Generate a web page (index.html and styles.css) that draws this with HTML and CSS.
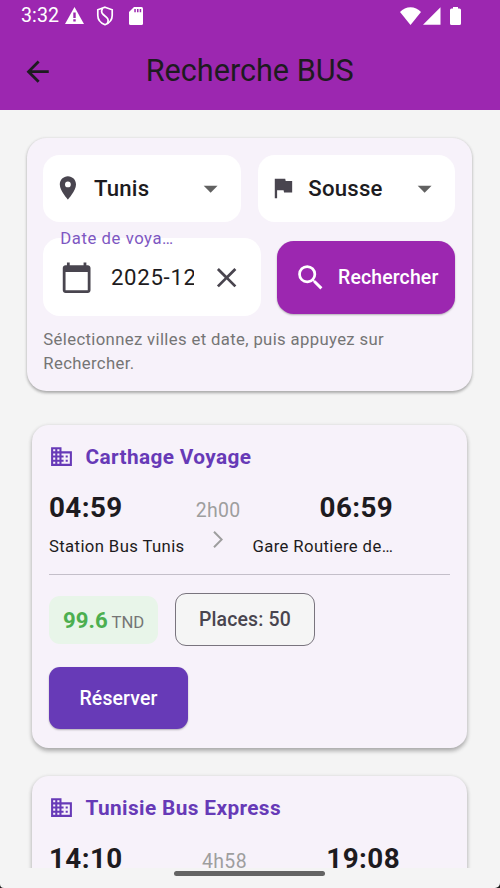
FILE: index.html
```html
<!DOCTYPE html>
<html lang="fr">
<head>
<meta charset="utf-8">
<title>Recherche BUS</title>
<link rel="stylesheet" href="styles.css">
</head>
<body>
<div class="screen">
  <header class="header">
    <div class="status">
      <span class="clock">3:32</span>
      <svg class="s-warn" viewBox="0 0 19 17"><path fill="#fff" d="M9.5 0 19 17H0z"/><path fill="#9c27b0" d="M8.300 5.500h2.400v5.500H8.300zM8.300 12.300h2.400v2.200H8.300z"/></svg>
      <svg class="s-shield" viewBox="0 0 18 20"><path fill="none" stroke="#fff" stroke-width="1.700" d="M9 1.200 16.200 3.800v5.700c0 4-2.800 7.500-7.200 9.200C4.600 17 1.800 13.500 1.800 9.500V3.800z"/><path fill="none" stroke="#fff" stroke-width="1.700" d="M6.500 2.500C5 5 5.500 7 7.200 8.500l3.600 3.200c1.700 1.700 1.700 3.800.4 6"/></svg>
      <svg class="s-sd" viewBox="0 0 14 18"><path fill="#fff" d="M5 0h7.500Q14 0 14 1.500v15q0 1.500-1.500 1.500h-11Q0 18 0 16.500V5z"/><path fill="#9c27b0" d="M5.300 2h1.500v3.200H5.300zM8 2h1.500v3.200H8zM10.700 2h1.500v3.200h-1.500z"/></svg>
      <svg class="s-wifi" viewBox="0 0 21 18"><path fill="#fff" d="M10.500 18 0 5C5.500-1.300 15.500-1.300 21 5z"/></svg>
      <svg class="s-cell" viewBox="0 0 18 18"><path fill="#fff" d="M18 0v18H0z"/></svg>
      <svg class="s-batt" viewBox="0 0 11 18"><path fill="#fff" d="M3 0h5v1.500h1.500Q11 1.500 11 3v13.500q0 1.500-1.500 1.500h-8Q0 18 0 16.500V3q0-1.500 1.500-1.500H3z"/></svg>
    </div>
    <div class="appbar">
      <svg class="icon back" viewBox="0 0 24 24"><path d="M20 11H7.830l5.590-5.590L12 4l-8 8 8 8 1.410-1.410L7.830 13H20z"/></svg>
      <h1 class="title">Recherche BUS</h1>
    </div>
  </header>

  <main class="content">
    <section class="search">
      <div class="selects">
        <div class="select">
          <svg class="icon small" viewBox="0 0 24 24"><path d="M12 2C8.130 2 5 5.130 5 9c0 5.250 7 13 7 13s7-7.750 7-13c0-3.870-3.130-7-7-7zm0 9.500a2.500 2.500 0 1 1 0-5 2.500 2.500 0 0 1 0 5z"/></svg>
          <span class="city">Tunis</span>
          <svg class="icon caret" viewBox="0 0 24 24"><path d="M7 10l5 5 5-5z"/></svg>
        </div>
        <div class="select">
          <svg class="icon small" viewBox="0 0 24 24"><path d="M14.400 6 14 4H5v17h2v-7h5.600l.4 2h7V6z"/></svg>
          <span class="city">Sousse</span>
          <svg class="icon caret" viewBox="0 0 24 24"><path d="M7 10l5 5 5-5z"/></svg>
        </div>
      </div>
      <div class="actions">
        <div class="date">
          <span class="label">Date de voya…</span>
          <svg class="icon" viewBox="0 0 24 24"><path d="M20 3h-1V1h-2v2H7V1H5v2H4c-1.100 0-2 .9-2 2v16c0 1.100.9 2 2 2h16c1.100 0 2-.9 2-2V5c0-1.100-.9-2-2-2zm0 18H4V8h16v13z"/></svg>
          <span class="value">2025-12</span>
          <svg class="icon" viewBox="0 0 24 24"><path d="M19 6.410 17.590 5 12 10.590 6.410 5 5 6.410 10.590 12 5 17.590 6.410 19 12 13.410 17.590 19 19 17.590 13.410 12z"/></svg>
        </div>
        <button class="find">
          <svg class="icon" viewBox="0 0 24 24"><path d="M15.500 14h-.79l-.28-.27A6.471 6.471 0 0 0 16 9.500 6.500 6.500 0 1 0 9.500 16c1.610 0 3.090-.59 4.230-1.570l.27.28v.79l5 4.990L20.490 19l-4.990-5zm-6 0C7.010 14 5 11.990 5 9.500S7.010 5 9.500 5 14 7.010 14 9.500 11.990 14 9.500 14z"/></svg>
          <span>Rechercher</span>
        </button>
      </div>
      <p class="hint">Sélectionnez villes et date, puis appuyez sur Rechercher.</p>
    </section>

    <article class="trip">
      <div class="company">
        <svg class="icon" viewBox="0 0 24 24"><path d="M12 7V3H2v18h20V7H12zM6 19H4v-2h2v2zm0-4H4v-2h2v2zm0-4H4V9h2v2zm0-4H4V5h2v2zm4 12H8v-2h2v2zm0-4H8v-2h2v2zm0-4H8V9h2v2zm0-4H8V5h2v2zm10 12h-8v-2h2v-2h-2v-2h2v-2h-2V9h8v10zm-2-8h-2v2h2v-2zm0 4h-2v2h2v-2z"/></svg>
        <h2>Carthage Voyage</h2>
      </div>
      <div class="route">
        <div class="stop"><span class="time">04:59</span><span class="place">Station Bus Tunis</span></div>
        <div class="leg"><span class="duration">2h00</span><svg class="chevron" viewBox="0 0 10 17"><path d="M1 .8 8.700 8.500 1 16.200"/></svg></div>
        <div class="stop end"><span class="time">06:59</span><span class="place">Gare Routiere de…</span></div>
      </div>
      <hr>
      <div class="chips">
        <div class="price"><b>99.6</b> <span>TND</span></div>
        <div class="seats">Places: 50</div>
      </div>
      <button class="book">Réserver</button>
    </article>

    <article class="trip">
      <div class="company">
        <svg class="icon" viewBox="0 0 24 24"><path d="M12 7V3H2v18h20V7H12zM6 19H4v-2h2v2zm0-4H4v-2h2v2zm0-4H4V9h2v2zm0-4H4V5h2v2zm4 12H8v-2h2v2zm0-4H8v-2h2v2zm0-4H8V9h2v2zm0-4H8V5h2v2zm10 12h-8v-2h2v-2h-2v-2h2v-2h-2V9h8v10zm-2-8h-2v2h2v-2zm0 4h-2v2h2v-2z"/></svg>
        <h2>Tunisie Bus Express</h2>
      </div>
      <div class="route wide">
        <div class="stop"><span class="time">14:10</span></div>
        <div class="leg"><span class="duration">4h58</span></div>
        <div class="stop end"><span class="time">19:08</span></div>
      </div>
    </article>
  </main>
  <footer class="nav"><div class="pill"></div></footer>
</div>
</body>
</html>
```
FILE: styles.css
```css
* { box-sizing: border-box; margin: 0; padding: 0; }
body { background: #1b1b1b; font-family: Roboto, "Liberation Sans", sans-serif; color: #1d1b20; }
button { border: 0; font-family: inherit; color: #fff; }
.screen { width: 500px; height: 888px; display: flex; flex-direction: column; overflow: hidden; background: #f4f4f4; border-radius: 0 0 5px 4px; }
.icon { width: 33.300px; height: 33.300px; flex: none; display: block; fill: currentColor; }

.header { height: 110.300px; flex: none; background: #9c27b0; }
.status { height: 33px; padding: 0 39px 0 21px; display: flex; align-items: flex-start; }
.clock { width: 44px; line-height: 24px; padding-top: 4px; font-size: 19.600px; letter-spacing: 0.1px; color: #fff; }
.s-warn { width: 19px; height: 17px; margin-top: 7px; }
.s-shield { width: 18px; height: 20px; margin: 6px 0 0 12px; }
.s-sd { width: 14px; height: 18px; margin: 7px 0 0 14.500px; }
.s-wifi { width: 21px; height: 18px; margin: 6.500px 2px 0 auto; }
.s-cell { width: 17.500px; height: 18px; margin-top: 6.500px; }
.s-batt { width: 11px; height: 18px; margin: 6.500px 0 0 9.500px; }
.appbar { height: 77px; display: grid; grid-template-columns: 1fr auto 1fr; align-items: center; padding-left: 21px; padding-right: 21.500px; }
.title { font-size: 30.600px; font-weight: 400; line-height: 38px; margin-top: -1px; }

.content { flex: 1; min-height: 0; overflow: hidden; padding: 28px 27px 0 26.600px; }
.search { width: 445.500px; height: 253px; padding: 16.700px 16.700px; border-radius: 19.400px; background: #f7f2fa; box-shadow: 0 1.500px 3px rgba(0,0,0,.28), 0 1px 4px rgba(0,0,0,.06); }
.selects { display: grid; grid-template-columns: 1fr 1fr; gap: 16.700px; }
.select { height: 66.700px; padding: 0 13.800px 0 11.200px; border-radius: 16.700px; background: #fff; display: flex; align-items: center; color: #49454f; }
.small { width: 27.800px; height: 27.800px; }
.city { flex: 1; margin-left: 11.700px; font-size: 22.200px; font-weight: 500; letter-spacing: .2px; color: #1d1b20; }
.caret { color: #616161; }
.actions { margin-top: 16.700px; display: flex; align-items: center; gap: 16.700px; }
.date { position: relative; width: 217.300px; height: 78px; padding: 0 17px; border-radius: 16.700px; background: #fff; display: flex; align-items: center; color: #49454f; }
.label { position: absolute; left: 17px; top: -10.500px; font-size: 16.700px; line-height: 22px; letter-spacing: .56px; color: #7e57c2; white-space: nowrap; }
.value { width: 83px; margin: 0 16.500px 0 17.300px; overflow: hidden; white-space: nowrap; font-size: 22.200px; line-height: 30px; letter-spacing: .7px; color: #1d1b20; }
.find { flex: 1; height: 73px; padding-left: 16.500px; border-radius: 16.700px; background: #9c27b0; display: flex; align-items: center; gap: 11px; font-size: 19.440px; font-weight: 500; letter-spacing: .14px; box-shadow: 0 1px 2px rgba(0,0,0,.28); }
.hint { margin-top: 12px; font-size: 16.700px; line-height: 24px; letter-spacing: .36px; color: #757575; }

.trip { width: 435px; height: 323px; margin: 34px 0 0 5.400px; padding: 16.700px 17px; border-radius: 16.700px; background: #f7f2fa; box-shadow: 0 2.500px 4px rgba(0,0,0,.28), 0 1px 5px rgba(0,0,0,.06); }
.trip + .trip { margin-top: 28px; }
.company { height: 30px; display: flex; align-items: center; gap: 11.500px; color: #673ab7; }
.company .icon { width: 25px; height: 25px; }
.company h2 { font-size: 20.800px; font-weight: 700; letter-spacing: .38px; line-height: 30px; }
.route { margin-top: 17px; display: grid; grid-template-columns: 146.700px 45px 152.500px; height: 71px; }
.route.wide { grid-template-columns: 153px 45px 153px; }
.stop { display: flex; flex-direction: column; }
.stop.end { align-items: flex-end; }
.time { font-size: 27.800px; font-weight: 700; line-height: 38px; letter-spacing: .4px; }
.place { margin-top: 9px; font-size: 16.700px; line-height: 22px; letter-spacing: .38px; white-space: nowrap; }
.leg { display: flex; flex-direction: column; align-items: center; color: #9e9e9e; }
.duration { font-size: 19.440px; line-height: 24px; letter-spacing: .35px; margin-top: 10px; }
.chevron { width: 10px; height: 17px; margin-top: 8px; fill: none; stroke: currentColor; stroke-width: 2; }
hr { border: 0; height: 1px; background: #c4bfc9; margin-top: 14.500px; }
.chips { margin-top: 18px; display: flex; align-items: center; gap: 16.700px; }
.price { width: 109.500px; height: 48.500px; padding-left: 14px; border-radius: 11px; background: #e8f5e9; line-height: 48.500px; font-size: 16.700px; color: #757575; white-space: nowrap; }
.price b { font-size: 22.200px; color: #4caf50; }
.seats { width: 139.500px; height: 53px; display: flex; align-items: center; justify-content: center; border: 1.400px solid #79747e; border-radius: 11px; background: #f5f5f5; font-size: 19.440px; font-weight: 500; letter-spacing: .14px; color: #49454f; }
.book { display: block; width: 139px; height: 61.500px; margin-top: 20.900px; border-radius: 11px; background: #673ab7; font-size: 19.440px; font-weight: 500; letter-spacing: .14px; box-shadow: 0 1px 2px rgba(0,0,0,.28); }

.nav { height: 20px; flex: none; display: flex; justify-content: center; align-items: flex-start; padding: 2.500px 1px 0 0; }
.pill { width: 151px; height: 5.500px; border-radius: 3px; background: #646464; }
```
